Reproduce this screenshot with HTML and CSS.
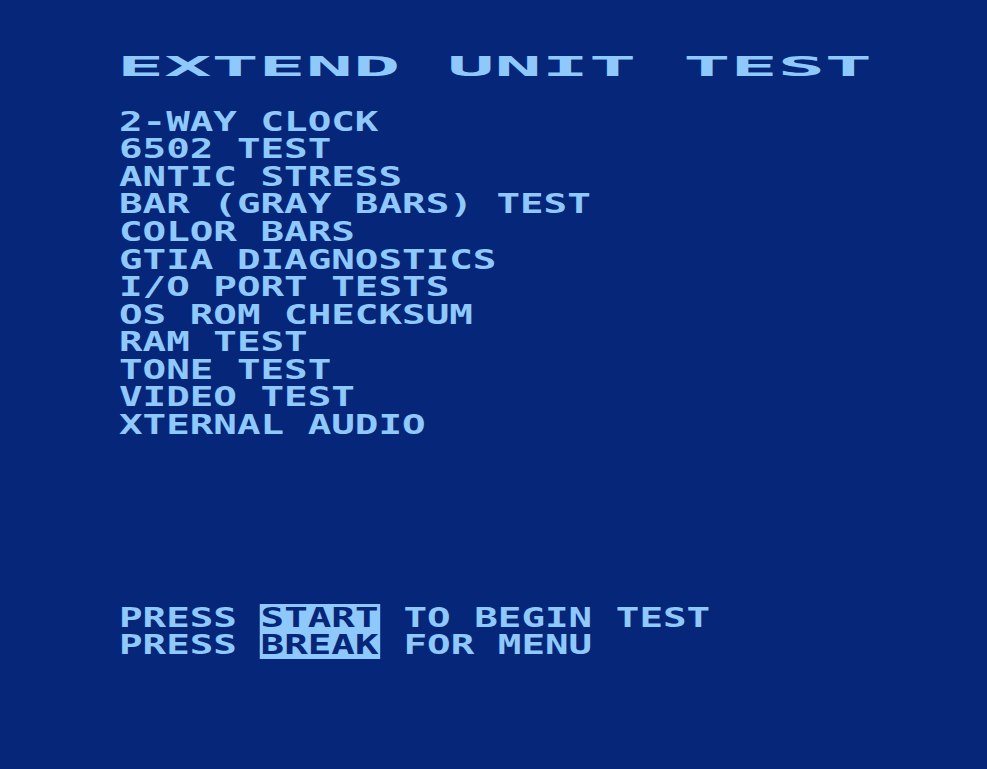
FILE: index.html
```html
<!DOCTYPE html>
<html lang="en">
<head>
<meta charset="utf-8">
<title>Extend Unit Test</title>
<link rel="stylesheet" href="styles.css">
</head>
<body>
<main class="screen">
  <h1 class="row title">EXTEND UNIT TEST</h1>
  <ul class="menu">
    <li class="row">2-WAY CLOCK</li>
    <li class="row">6502 TEST</li>
    <li class="row">ANTIC STRESS</li>
    <li class="row">BAR (GRAY BARS) TEST</li>
    <li class="row">COLOR BARS</li>
    <li class="row">GTIA DIAGNOSTICS</li>
    <li class="row">I/O PORT TESTS</li>
    <li class="row">OS ROM CHECKSUM</li>
    <li class="row">RAM TEST</li>
    <li class="row">TONE TEST</li>
    <li class="row">VIDEO TEST</li>
    <li class="row">XTERNAL AUDIO</li>
  </ul>
  <div class="prompt">
    <p class="row">PRESS <span class="key">START</span> TO BEGIN TEST</p>
    <p class="row">PRESS <span class="key">BREAK</span> FOR MENU</p>
  </div>
</main>
</body>
</html>
```

FILE: styles.css
```css
:root {
  --bg: #062679;
  --fg: #8fc9fb;
  --row: 27.55px;
}

html, body {
  margin: 0;
  padding: 0;
  background: var(--bg);
}

.screen {
  width: 987px;
  height: 769px;
  box-sizing: border-box;
  padding: 52.7px 0 0 118.5px;
  background: var(--bg);
  color: var(--fg);
  font-family: "DejaVu Sans Mono", "Liberation Mono", monospace;
  font-weight: bold;
  font-size: 27px;
  overflow: hidden;
}

/* one character row of the 40-column text screen */
.row {
  display: block;
  margin: 0;
  height: var(--row);
  line-height: var(--row);
  white-space: pre;
  transform: scaleX(1.451);
  transform-origin: 0 50%;
}

/* double-width heading row */
.title {
  font-size: 27px;
  font-weight: bold;
  margin-left: -2px;
  transform: scaleX(2.903);
}

.menu {
  list-style: none;
  margin: var(--row) 0 0;
  padding: 0;
}

.prompt {
  margin-top: calc(var(--row) * 6);
}

/* inverse-video key names */
.key {
  display: inline-block;
  height: var(--row);
  line-height: var(--row);
  vertical-align: top;
  margin-left: -1px;
  padding: 0 1px;
  background: var(--fg);
  color: var(--bg);
}
```
